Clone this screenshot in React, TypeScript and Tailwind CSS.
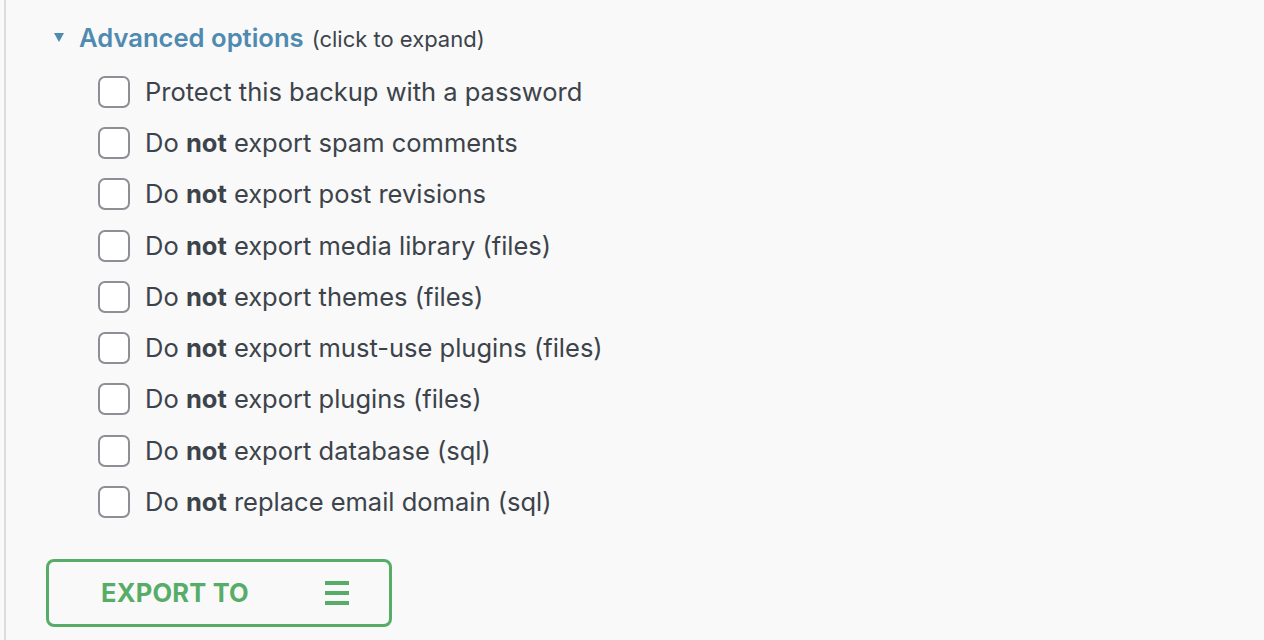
const options: { pre: string; bold?: string; post: string }[] = [
  { pre: "Protect this backup with a password", post: "" },
  { pre: "Do ", bold: "not", post: " export spam comments" },
  { pre: "Do ", bold: "not", post: " export post revisions" },
  { pre: "Do ", bold: "not", post: " export media library (files)" },
  { pre: "Do ", bold: "not", post: " export themes (files)" },
  { pre: "Do ", bold: "not", post: " export must-use plugins (files)" },
  { pre: "Do ", bold: "not", post: " export plugins (files)" },
  { pre: "Do ", bold: "not", post: " export database (sql)" },
  { pre: "Do ", bold: "not", post: " replace email domain (sql)" },
];

export default function App() {
  return (
    <div className="h-[640px] w-[1264px] overflow-hidden bg-[#f9f9f9] font-['Inter',sans-serif] text-[#3c434a]">
      <div className="ml-[4px] h-full border-l-2 border-[#dcdcde] pl-[40px]">
        <div className="flex items-center pl-[8px] pt-[20px]">
          <span className="mr-[15px] h-0 w-0 border-x-[5px] border-t-[9px] border-x-transparent border-t-[#4f8ab0]" />
          <span className="text-[25.6px] font-semibold leading-[32px] text-[#4f8ab0]">Advanced options</span>
          <span className="ml-[8px] mt-[3px] text-[22px] leading-[32px] text-[#3c434a]">(click to expand)</span>
        </div>
        <ul className="mt-[11px] flex flex-col pl-[52px]">
          {options.map((o, i) => (
            <li key={i} className="flex h-[51.3px] items-center">
              <span className="mr-[15px] h-[32px] w-[32px] shrink-0 rounded-[7px] border-2 border-[#8c8f94] bg-white" />
              <span className="text-[25.5px] leading-[32px]">
                {o.pre}
                {o.bold && <b className="font-bold">{o.bold}</b>}
                {o.post}
              </span>
            </li>
          ))}
        </ul>
        <button className="mt-[31px] flex h-[68px] w-[346px] items-center rounded-[8px] border-[3px] border-[#57ad68] pl-[52px] pr-[40px] text-[#57ad68]">
          <span className="text-[25.5px] font-bold leading-none tracking-[0.2px]">EXPORT TO</span>
          <span className="ml-auto flex w-[24px] flex-col gap-[6px]">
            <span className="h-[4px] w-[24px] bg-[#57ad68]" />
            <span className="h-[4px] w-[24px] bg-[#57ad68]" />
            <span className="h-[4px] w-[24px] bg-[#57ad68]" />
          </span>
        </button>
      </div>
    </div>
  );
}
